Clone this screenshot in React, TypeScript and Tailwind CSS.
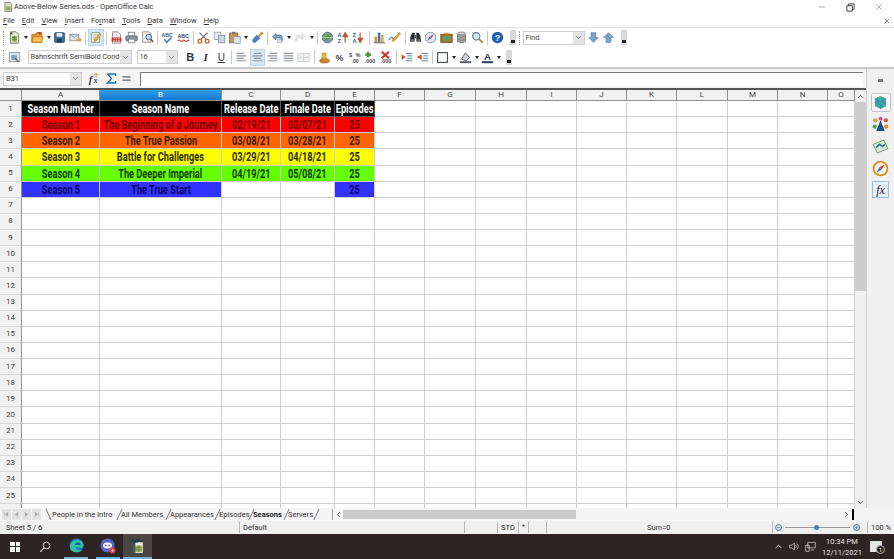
import type { ReactNode } from "react";
import { ChevronDown, ChevronLeft, ChevronRight, ChevronUp, X, Minus } from "lucide-react";

const COLUMNS = ["A", "B", "C", "D", "E", "F", "G", "H", "I", "J", "K", "L", "M", "N", "O"];

const ROWS = [
  { bg: "bg-[#ff0000]", text: "text-[#6e0606]", cells: ["Season 1", "The Beginning of a Journey", "02/19/21", "03/07/21", "25"] },
  { bg: "bg-[#ff6600]", text: "text-[#3c1a02]", cells: ["Season 2", "The True Passion", "03/08/21", "03/28/21", "25"] },
  { bg: "bg-[#ffff00]", text: "text-[#2c2c02]", cells: ["Season 3", "Battle for Challenges", "03/29/21", "04/18/21", "25"] },
  { bg: "bg-[#66ff00]", text: "text-[#123d02]", cells: ["Season 4", "The Deeper Imperial", "04/19/21", "05/08/21", "25"] },
  { bg: "bg-[#3333ff]", text: "text-[#08085e]", cells: ["Season 5", "The True Start", "", "", "25"] },
];

const HEADERS = ["Season Number", "Season Name", "Release Date", "Finale Date", "Episodes"];
const TABS = [
  { name: "People in the Intro", w: "w-[69px]" },
  { name: "All Members", w: "w-[49px]" },
  { name: "Appearances", w: "w-[49px]" },
  { name: "Episodes", w: "w-[34px]" },
  { name: "Seasons", w: "w-[35px]" },
  { name: "Servers", w: "w-[30px]" },
];
const NAV_ARROWS = ["M7 2v6L3 5zM2 2v6", "M7 2v6L3 5z", "M3 2v6l4-3z", "M3 2v6l4-3zM8 2v6"];

function Svg({ children }: { children: ReactNode }) {
  return (
    <svg viewBox="0 0 16 16" className="h-[13px] w-[13px]">
      {children}
    </svg>
  );
}

const Icons = {
  newDoc: (
    <Svg>
      <path d="M3 1h7l3 3v11H3z" fill="#e8e8d8" stroke="#5d6b3a" />
      <path d="M5 6h6v7H5z" fill="#9bb45e" />
      <path d="M5 8h6M5 10.500h6M8 6v7" stroke="#4d5f2a" strokeWidth=".7" />
      <path d="M4 1l2 3-3 0z" fill="#333" />
    </Svg>
  ),
  open: (
    <Svg>
      <path d="M1 4h5l1-2h6v12H1z" fill="#e8a033" stroke="#a86a14" />
      <path d="M3 7h12l-2 7H1z" fill="#f6c057" stroke="#b57818" />
      <path d="M8 2l3-1 2 2-2 2z" fill="#c23a2b" />
    </Svg>
  ),
  save: (
    <Svg>
      <rect x="2" y="2" width="12" height="12" rx="1" fill="#3f6f9c" stroke="#284b6c" />
      <rect x="4.500" y="2.500" width="7" height="4.500" fill="#e8eef4" />
      <rect x="5" y="9.500" width="6" height="4.500" fill="#1f3c57" />
    </Svg>
  ),
  mail: (
    <Svg>
      <rect x="1" y="4" width="11" height="8" fill="#dfe3ea" stroke="#8a8f99" />
      <path d="M1 4l5.500 4L12 4" fill="none" stroke="#8a8f99" />
      <path d="M9 10h4V8l3 3-3 3v-2H9z" fill="#e69a24" />
    </Svg>
  ),
  edit: (
    <Svg>
      <path d="M3 2h10v12H3z" fill="#f4f4ee" stroke="#8a8a80" />
      <path d="M5 5h6M5 7.500h4M5 10h3" stroke="#a8a8a0" />
      <path d="M13 3l2 2-6 7-3 1 1-3z" fill="#e5b23a" stroke="#9c7414" strokeWidth=".6" />
    </Svg>
  ),
  pdf: (
    <Svg>
      <path d="M3 1h7l3 3v11H3z" fill="#eee" stroke="#888" />
      <rect x="2" y="8" width="12" height="5" fill="#c8261e" />
      <path d="M4 9.500h8M4 11.500h8" stroke="#fff" strokeWidth=".9" strokeDasharray="2 1" />
    </Svg>
  ),
  print: (
    <Svg>
      <rect x="4" y="1.500" width="8" height="5" fill="#f5f5f5" stroke="#777" />
      <rect x="1" y="6" width="14" height="6" rx="1" fill="#8f939b" stroke="#5e6168" />
      <rect x="4" y="10" width="8" height="4.500" fill="#fff" stroke="#777" />
    </Svg>
  ),
  preview: (
    <Svg>
      <path d="M2 1h8l2 2v11H2z" fill="#eee" stroke="#8a8a8a" />
      <circle cx="9.500" cy="7.500" r="3.500" fill="#b9d8f0" stroke="#4b6c8c" strokeWidth="1.200" />
      <path d="M12 10l3 3.500" stroke="#8a5a20" strokeWidth="2" />
    </Svg>
  ),
  spell: (
    <Svg>
      <text x="0.500" y="7" fontSize="6.500" fontWeight="700" fontFamily="Liberation Sans" fill="#2d5c8f">ABC</text>
      <path d="M4 10l3 4 6-6" fill="none" stroke="#3a7fc0" strokeWidth="2" />
    </Svg>
  ),
  autoSpell: (
    <Svg>
      <text x="0.500" y="8" fontSize="6.500" fontWeight="700" fontFamily="Liberation Sans" fill="#2d4a6f">ABC</text>
      <path d="M1 12q1.500-2 3 0t3 0 3 0 3 0 2 0" fill="none" stroke="#d02a22" strokeWidth="1.300" />
    </Svg>
  ),
  cut: (
    <Svg>
      <path d="M3 2l9 9M13 2l-9 9" stroke="#6a6f78" strokeWidth="1.500" />
      <circle cx="3.500" cy="12.500" r="2.300" fill="none" stroke="#c9601a" strokeWidth="1.600" />
      <circle cx="12.500" cy="12.500" r="2.300" fill="none" stroke="#c9601a" strokeWidth="1.600" />
    </Svg>
  ),
  copy: (
    <Svg>
      <rect x="1.500" y="1.500" width="8" height="9" fill="#e6edf5" stroke="#8fa0b4" />
      <rect x="6.500" y="5.500" width="8" height="9" fill="#c8d6e6" stroke="#7d90a8" />
    </Svg>
  ),
  paste: (
    <Svg>
      <rect x="2" y="2.500" width="10" height="12" fill="#c89a56" stroke="#8a6428" />
      <rect x="5" y="1" width="4" height="3" fill="#777" />
      <rect x="7" y="7" width="8" height="8" fill="#dfe7f2" stroke="#7d90a8" />
    </Svg>
  ),
  brush: (
    <Svg>
      <path d="M9 6l4-5 2 2-5 4z" fill="#d9a23a" stroke="#8f6a1c" strokeWidth=".6" />
      <path d="M2 11l5-6 4 4-6 5q-3 1-3-3z" fill="#4f83c4" stroke="#2d5688" strokeWidth=".7" />
    </Svg>
  ),
  undo: (
    <Svg>
      <path d="M6 3L2 7l4 4V8.500h4q2 0 2 2v1l2 1V8q0-3-3-3H6z" fill="#7ea4c8" stroke="#48698a" strokeWidth=".8" />
      <rect x="8" y="10" width="5" height="4.500" fill="#dfe7f2" stroke="#8fa0b4" strokeWidth=".6" />
    </Svg>
  ),
  redo: (
    <Svg>
      <path d="M10 3l4 4-4 4V8.500H6q-2 0-2 2v1l-2 1V8q0-3 3-3h5z" fill="#e8e8e8" stroke="#d6d6d6" strokeWidth=".8" />
    </Svg>
  ),
  globe: (
    <Svg>
      <circle cx="8" cy="8" r="6.500" fill="#7d98a8" stroke="#4a6270" />
      <path d="M3 5q3 1 5-1t4 1l1 3q-3 0-4 2l-2 3q-1-2-3-3z" fill="#68a04a" />
      <path d="M1.500 8h13" stroke="#dfe8ee" strokeWidth=".7" />
    </Svg>
  ),
  sortAsc: (
    <Svg>
      <text x="0.500" y="7" fontSize="7" fontWeight="700" fontFamily="Liberation Sans" fill="#2d5c8f">A</text>
      <text x="0.500" y="15" fontSize="7" fontWeight="700" fontFamily="Liberation Sans" fill="#2d5c8f">Z</text>
      <path d="M10 14V5M7.500 7L10 2l3 5z" stroke="#c2532a" strokeWidth="1.500" fill="#c2532a" />
    </Svg>
  ),
  sortDesc: (
    <Svg>
      <text x="0.500" y="7" fontSize="7" fontWeight="700" fontFamily="Liberation Sans" fill="#2d5c8f">Z</text>
      <text x="0.500" y="15" fontSize="7" fontWeight="700" fontFamily="Liberation Sans" fill="#2d5c8f">A</text>
      <path d="M10 2v9M7.500 9l2.500 5 3-5z" stroke="#c2532a" strokeWidth="1.500" fill="#c2532a" />
    </Svg>
  ),
  chart: (
    <Svg>
      <rect x="2" y="7" width="3" height="7" fill="#d9862a" />
      <rect x="6" y="2" width="3" height="12" fill="#3d6fa8" />
      <rect x="10" y="5" width="3" height="9" fill="#d9a23a" />
      <path d="M1 14.500h14" stroke="#444" />
    </Svg>
  ),
  draw: (
    <Svg>
      <path d="M1 11q3-5 5-2t4-3" fill="none" stroke="#4f83c4" strokeWidth="1.500" />
      <path d="M14 2l1.500 1.500L8 12l-3 1 1-3z" fill="#e5a83a" stroke="#9c7414" strokeWidth=".6" />
    </Svg>
  ),
  binoculars: (
    <Svg>
      <path d="M2 6l2-4h3v11H1zM14 6l-2-4H9v11h6z" fill="#2e3238" />
      <rect x="7" y="5" width="2" height="4" fill="#55595f" />
      <rect x="2" y="10" width="4" height="3" fill="#6c7076" />
      <rect x="10" y="10" width="4" height="3" fill="#6c7076" />
    </Svg>
  ),
  navigator: (
    <Svg>
      <circle cx="8" cy="8" r="6.500" fill="#dfe5ee" stroke="#7d8694" />
      <path d="M12 4L7 7l2 2z" fill="#c8352a" />
      <path d="M4 12l3-5 2 2z" fill="#3d6fa8" />
    </Svg>
  ),
  gallery: (
    <Svg>
      <rect x="1" y="4" width="14" height="10" fill="#a8752c" stroke="#6e4a14" />
      <rect x="3.500" y="6" width="9" height="6" fill="#5f9a6a" />
      <path d="M5 2h6v2H5z" fill="#d9a23a" />
    </Svg>
  ),
  database: (
    <Svg>
      <path d="M3 3v10q5 3 10 0V3z" fill="#a8a8a4" stroke="#74746f" />
      <ellipse cx="8" cy="3" rx="5" ry="1.800" fill="#d6d6d2" stroke="#74746f" />
      <path d="M3 6.500q5 3 10 0M3 10q5 3 10 0" fill="none" stroke="#74746f" />
    </Svg>
  ),
  zoom: (
    <Svg>
      <circle cx="6.500" cy="6.500" r="4.500" fill="#cfe4f4" stroke="#5a7a96" strokeWidth="1.300" />
      <path d="M10 10l4.500 4.500" stroke="#b47f24" strokeWidth="2.200" />
    </Svg>
  ),
  help: (
    <Svg>
      <circle cx="8" cy="8" r="7" fill="#1d5fb0" />
      <text x="8" y="12" textAnchor="middle" fontSize="11" fontWeight="700" fontFamily="Liberation Sans" fill="#fff">?</text>
    </Svg>
  ),
  arrowDown: (
    <Svg>
      <path d="M5 2h6v6h3l-6 6-6-6h3z" fill="#7ba3c9" stroke="#55799c" strokeWidth=".7" />
    </Svg>
  ),
  arrowUp: (
    <Svg>
      <path d="M5 14h6V8h3L8 2 2 8h3z" fill="#7ba3c9" stroke="#55799c" strokeWidth=".7" />
    </Svg>
  ),
  styles: (
    <Svg>
      <rect x="1.500" y="2" width="13" height="11" fill="#e2e5ea" stroke="#8a8f99" />
      <rect x="4" y="5" width="7" height="6" fill="#8a9fb4" />
      <path d="M9 9l4 4" stroke="#555" strokeWidth="1.500" />
    </Svg>
  ),
  currency: (
    <Svg>
      <ellipse cx="8" cy="12" rx="6" ry="2.800" fill="#c9862a" stroke="#8a5a14" strokeWidth=".7" />
      <path d="M5 2.500h5V10H5z" fill="#e8b64c" stroke="#9c7414" strokeWidth=".6" />
    </Svg>
  ),
  percent: (
    <Svg>
      <text x="8" y="12" textAnchor="middle" fontSize="11" fontWeight="700" fontFamily="Liberation Sans" fill="#3c4450">%</text>
    </Svg>
  ),
  numFormat: (
    <Svg>
      <text x="0" y="7" fontSize="7" fontWeight="700" fontFamily="Liberation Sans" fill="#2d5c8f">$</text>
      <text x="8" y="7" fontSize="7" fontWeight="700" fontFamily="Liberation Sans" fill="#3c4450">%</text>
      <text x="3" y="15" fontSize="6.500" fontWeight="700" fontFamily="Liberation Sans" fill="#3c4450">.00</text>
    </Svg>
  ),
  addDec: (
    <Svg>
      <path d="M5 1v7M1.500 4.500h7" stroke="#4f9a3c" strokeWidth="3" />
      <text x="1" y="15" fontSize="6.500" fontWeight="700" fontFamily="Liberation Sans" fill="#3c4450">.000</text>
    </Svg>
  ),
  delDec: (
    <Svg>
      <path d="M2 1l9 8M11 1L2 9" stroke="#cf2f25" strokeWidth="2.500" />
      <text x="1" y="15" fontSize="6.500" fontWeight="700" fontFamily="Liberation Sans" fill="#3c4450">.000</text>
    </Svg>
  ),
  outdent: (
    <Svg>
      <path d="M7 3h8M9 6h6M9 9h6M7 12h8" stroke="#5b7ea3" strokeWidth="1.200" />
      <path d="M7 7.500L2 4v7z" fill="#d1502a" />
    </Svg>
  ),
  indent: (
    <Svg>
      <path d="M7 3h8M9 6h6M9 9h6M7 12h8" stroke="#5b7ea3" strokeWidth="1.200" />
      <path d="M1 7.500L7 4v7z" fill="#d1502a" />
    </Svg>
  ),
  border: (
    <Svg>
      <rect x="2" y="2" width="12" height="12" fill="#fff" stroke="#3f4650" strokeWidth="1.300" />
    </Svg>
  ),
  bgColor: (
    <Svg>
      <path d="M3 10l5-8 5 6-4 4z" fill="#cfd3d8" stroke="#4a4f57" />
      <rect x="1" y="12.500" width="14" height="2.500" fill="#5a606a" />
    </Svg>
  ),
  fontColor: (
    <Svg>
      <text x="8" y="11" textAnchor="middle" fontSize="12" fontWeight="700" fontFamily="Liberation Sans" fill="#2c4463">A</text>
      <rect x="1" y="12.500" width="14" height="2.500" fill="#2c4463" />
    </Svg>
  ),
  fx: (
    <Svg>
      <text x="1" y="13" fontSize="13" fontStyle="italic" fontWeight="700" fontFamily="Liberation Serif" fill="#303a46">f</text>
      <text x="7" y="13" fontSize="9" fontStyle="italic" fontWeight="700" fontFamily="Liberation Serif" fill="#303a46">x</text>
      <path d="M10 1v5M7.500 3.500h5" stroke="#d9a23a" strokeWidth="1.300" />
    </Svg>
  ),
  sigma: (
    <Svg>
      <path d="M3 2.500h10v2.500M13 13.500H3l5-5.500-5-5.500M3 13.500h10V11" fill="none" stroke="#2e6fb0" strokeWidth="1.700" />
    </Svg>
  ),
  equals: (
    <Svg>
      <path d="M3 6h10M3 10h10" stroke="#5a626c" strokeWidth="1.500" />
    </Svg>
  ),
};

function Btn({ icon, active }: { icon: ReactNode; active?: boolean }) {
  return (
    <div
      className={`flex h-[17px] w-[15.500px] shrink-0 items-center justify-center ${
        active ? "border border-[#b5d3ea] bg-[#d6e8f5]" : ""
      }`}
    >
      {icon}
    </div>
  );
}

function Drop() {
  return (
    <div className="flex h-[17px] w-[7px] shrink-0 items-center justify-center">
      <div className="h-0 w-0 border-x-[2.500px] border-t-[3px] border-x-transparent border-t-[#222]" />
    </div>
  );
}

function Sep() {
  return <div className="mx-[2px] h-[14px] w-px shrink-0 bg-[#c9c9c9]" />;
}

function Overflow() {
  return (
    <div className="flex h-[15px] w-[6px] shrink-0 items-end justify-center bg-[#d8d8d8] pb-[2px]">
      <div className="h-[3px] w-[4px] bg-[#222]" />
    </div>
  );
}

function Grip() {
  return <div className="mx-[3px] h-[14px] w-0 shrink-0 border-l border-dotted border-[#9a9a9a]" />;
}

function Combo({ label, width }: { label: string; width: string }) {
  return (
    <div className={`flex h-[14px] shrink-0 items-center border border-[#d0d0d0] bg-white pl-[2px] ${width}`}>
      <span className="min-w-0 flex-1 whitespace-nowrap text-[7.500px] leading-none tracking-[-0.1px] text-[#444]">{label}</span>
      <div className="flex h-full w-[11px] shrink-0 items-center justify-center bg-[#e4e4e4]">
        <ChevronDown size={9} className="text-[#777]" />
      </div>
    </div>
  );
}

function Narrow({ children }: { children: ReactNode }) {
  return (
    <span className="inline-block origin-center scale-x-[0.71] whitespace-nowrap font-['Roboto',sans-serif] text-[13px] leading-none font-bold">
      {children}
    </span>
  );
}

function Sheet() {
  const cell = "flex items-center justify-center overflow-hidden border-r border-b";
  const head = "flex items-center justify-center border-r border-b border-[#8f8f8f] bg-[#f1f1f1] text-[8px] leading-none text-[#444]";
  return (
    <div className="grid grid-cols-[22px_78px_122px_59px_54px_40px_50px_51px_51px_50px_50px_50px_51px_50px_50px_27px] grid-rows-[11px] auto-rows-[16.125px] content-start">
      <div className="border-r border-b border-[#8f8f8f] bg-[#f1f1f1]" />
      {COLUMNS.map((c) => (
        <div
          key={c}
          className={`${head} ${c === "B" ? "bg-gradient-to-b from-[#35a0ea] to-[#0f78cf] text-white" : ""}`}
        >
          {c}
        </div>
      ))}
      {Array.from({ length: 26 }, (_, r) => {
        const row = r > 0 ? ROWS[r - 1] : undefined;
        return (
          <div key={r} className="contents">
            <div className={`${head} border-b-[#d8d8d8] border-r-[#8f8f8f]`}>{r + 1}</div>
            {COLUMNS.map((c, i) => {
              if (r === 0 && i < 5) {
                return (
                  <div key={c} className={`${cell} border-[#555] bg-black text-white`}>
                    <Narrow>{HEADERS[i]}</Narrow>
                  </div>
                );
              }
              if (row && i < 5 && row.cells[i] !== "") {
                return (
                  <div key={c} className={`${cell} border-[#cfcfcf] ${row.bg} ${row.text}`}>
                    <Narrow>{row.cells[i]}</Narrow>
                  </div>
                );
              }
              return <div key={c} className={`${cell} border-[#cfcfcf] bg-white`} />;
            })}
          </div>
        );
      })}
    </div>
  );
}

function TabStrip() {
  return (
    <div className="flex h-[13px] shrink-0 items-center bg-[#f5f5f5] text-[7.500px] leading-none text-[#333]">
      <div className="flex w-[42px] shrink-0 justify-end gap-[1px] pr-[1px]">
        {NAV_ARROWS.map((d) => (
          <span key={d} className="flex h-[11px] w-[9px] items-center justify-center bg-[#e2e2e2]">
            <svg viewBox="0 0 10 10" className="h-[7px] w-[7px]">
              <path d={d} fill="#a8a8a8" stroke="#a8a8a8" strokeWidth=".6" />
            </svg>
          </span>
        ))}
      </div>
      <div className="flex w-[276px] shrink-0 items-center pl-[6px]">
        <div className="mr-[3px] h-[11px] w-0 shrink-0 skew-x-[25deg] border-l border-[#777]" />
        {TABS.map((t) => (
          <div key={t.name} className={`flex shrink-0 items-center justify-between ${t.w}`}>
            <span className={`whitespace-nowrap ${t.name === "Seasons" ? "font-bold text-[#222]" : ""}`}>{t.name}</span>
            <div className="mr-[1px] h-[11px] w-0 shrink-0 -skew-x-[25deg] border-l border-[#777]" />
          </div>
        ))}
      </div>
      <div className="h-[11px] w-[15px] shrink-0 border-r border-[#999]" />
      <ChevronLeft size={9} className="ml-[1px] shrink-0 text-[#333]" />
      <div className="h-[9px] w-[233px] shrink-0 bg-[#c9c9c9]" />
      <div className="flex flex-1 items-center justify-end">
        <ChevronRight size={9} className="text-[#333]" />
        <div className="mx-[1px] h-[11px] w-[2px] bg-black" />
      </div>
      <div className="w-[39px] shrink-0 bg-[#f0f0f0]" />
    </div>
  );
}

function StatusBar() {
  const sep = "h-[11px] shrink-0 border-l border-[#b5b5b5] flex items-center";
  return (
    <div className="flex h-[13px] shrink-0 items-center bg-[#f0f0f0] text-[7.500px] leading-none text-[#333]">
      <span className="w-[239px] shrink-0 pl-[6px]">Sheet 5 / 6</span>
      <div className={`${sep} w-[225px] pl-[3px]`}>Default</div>
      <div className={`${sep} w-[33px]`} />
      <div className={`${sep} w-[21px] pl-[3px]`}>STD</div>
      <div className={`${sep} w-[10px] justify-center text-[7px]`}>*</div>
      <div className={`${sep} w-[18px]`} />
      <div className={`${sep} w-[226px] pl-[100px]`}>Sum=0</div>
      <div className={`${sep} w-[95px] pl-[2px]`}>
        <span className="flex h-[7px] w-[7px] items-center justify-center rounded-full border border-[#4d7ea8] bg-[#cfe0ee] text-[#4d7ea8]">
          <Minus size={5} strokeWidth={3} />
        </span>
        <div className="relative mx-[3px] h-px w-[65px] bg-[#9a9a9a]">
          <span className="absolute left-[29px] top-[-2px] h-[5px] w-[5px] rounded-full bg-[#4d7ea8]" />
        </div>
        <span className="flex h-[7px] w-[7px] items-center justify-center rounded-full border border-[#4d7ea8] bg-[#cfe0ee] text-[8px] leading-none text-[#4d7ea8]">
          +
        </span>
      </div>
      <div className={`${sep} min-w-0 flex-1 whitespace-nowrap pl-[3px]`}>100 %</div>
    </div>
  );
}

function Taskbar() {
  return (
    <div className="flex h-[25px] shrink-0 items-center bg-[#2c2523] text-white">
      <div className="flex w-[30px] shrink-0 justify-center">
        <div className="grid h-[10px] w-[10px] grid-cols-2 gap-px">
          <span className="bg-white" />
          <span className="bg-white" />
          <span className="bg-white" />
          <span className="bg-white" />
        </div>
      </div>
      <div className="flex w-[30px] shrink-0 justify-center">
        <svg viewBox="0 0 16 16" className="h-[12px] w-[12px]">
          <circle cx="10" cy="6" r="4.500" fill="none" stroke="#ddd" strokeWidth="1.300" />
          <path d="M6.500 9.500L1.500 14.500" stroke="#ddd" strokeWidth="1.500" />
        </svg>
      </div>
      <div className="ml-[4px] flex h-full w-[24px] shrink-0 items-center justify-center border-b-2 border-[#6fb3e0]">
        <svg viewBox="0 0 16 16" className="h-[15px] w-[15px]">
          <circle cx="8" cy="8" r="7.500" fill="#1777c4" />
          <path d="M1 9q1-7 8-7 6 0 6.500 6 0 2-3 2H7q1 3 5 3l2-.5q-2 3-6 2.500Q1 15 1 9z" fill="#35c1a4" />
          <path d="M6 7.500q1-3 3.500-3t3 3z" fill="#1b5fa8" />
        </svg>
      </div>
      <div className="ml-[8px] flex h-full w-[24px] shrink-0 items-center justify-center border-b-2 border-[#6fb3e0]">
        <svg viewBox="0 0 16 16" className="h-[16px] w-[16px]">
          <circle cx="7.500" cy="7.500" r="7" fill="#5865c8" />
          <ellipse cx="7.500" cy="7.500" rx="4.500" ry="3" fill="#fff" />
          <circle cx="5.800" cy="7.500" r="1" fill="#5865c8" />
          <circle cx="9.200" cy="7.500" r="1" fill="#5865c8" />
          <circle cx="12.500" cy="12.500" r="3" fill="#e23b3b" />
          <circle cx="12.500" cy="12.500" r="1" fill="#fff" />
        </svg>
      </div>
      <div className="ml-[3px] flex h-full w-[29px] shrink-0 items-center justify-center border-b-2 border-[#6fb3e0] bg-[#4b4644]">
        <svg viewBox="0 0 16 16" className="h-[17px] w-[17px]">
          <path d="M4 5h9v10H4z" fill="#e9ecd8" />
          <path d="M6 8h6v6H6z" fill="#93b04c" />
          <path d="M6 10h6M6 12h6M9 8v6" stroke="#5d7428" strokeWidth=".6" />
          <path d="M2 2l5 1 3-2 1 3-7 2z" fill="#1f3f48" />
          <path d="M3 5h3v10H3z" fill="#3a5560" />
        </svg>
      </div>
      <div className="flex-1" />
      <ChevronUp size={11} className="mr-[5px] shrink-0 text-[#ddd]" />
      <svg viewBox="0 0 16 16" className="mr-[5px] h-[11px] w-[11px] shrink-0">
        <path d="M1 6h3l4-3v10l-4-3H1z" fill="none" stroke="#ddd" />
        <path d="M10 6q1.500 2 0 4M12 4q3 4 0 8" fill="none" stroke="#ddd" />
      </svg>
      <svg viewBox="0 0 16 16" className="mr-[5px] h-[11px] w-[11px] shrink-0">
        <path d="M4 2h11v8H4zM1 6h5v9H1zM8 13h5" fill="#2c2523" stroke="#ddd" />
      </svg>
      <div className="flex w-[42px] shrink-0 flex-col items-center text-[7.500px] leading-[11px] text-[#e6e6e6]">
        <span>10:34 PM</span>
        <span>12/11/2021</span>
      </div>
      <div className="ml-[7px] flex w-[24px] shrink-0 items-center">
        <div className="relative h-[11px] w-[12px] bg-[#e6e6e6]">
          <span className="absolute left-[6px] top-[4px] flex h-[9px] w-[9px] items-center justify-center rounded-full border border-[#aaa] bg-[#2c2523] text-[6px] leading-none text-white">
            1
          </span>
        </div>
      </div>
    </div>
  );
}

export default function App() {
  return (
    <div className="flex h-[559px] w-[894px] flex-col overflow-hidden bg-white font-['Roboto',sans-serif]">
      <div className="flex h-[14px] shrink-0 items-center text-[7.500px] leading-none text-[#333]">
        <div className="ml-[3px] mr-[3px] w-[8px]">
          <svg viewBox="0 0 16 16" className="h-[10px] w-[10px]">
            <path d="M3 1h9l2 3v11H3z" fill="#dde2c8" stroke="#39502c" />
            <path d="M5 7h7v6H5z" fill="#8daa4c" />
          </svg>
        </div>
        <span className="flex-1">Above-Below Series.ods - OpenOffice Calc</span>
        <Minus size={10} strokeWidth={1} className="mr-[19px]" />
        <svg viewBox="0 0 10 10" className="mr-[19px] h-[9px] w-[9px]">
          <path d="M1 3h6v6H1zM3 3V1h6v6H7" fill="none" stroke="#333" />
        </svg>
        <X size={10} strokeWidth={1} className="mr-[10px]" />
      </div>

      <div className="flex h-[14px] shrink-0 items-center gap-[7px] border-b border-[#e4e4e4] pl-[3px] text-[7.500px] leading-none text-[#333]">
        <span><u>F</u>ile</span>
        <span><u>E</u>dit</span>
        <span><u>V</u>iew</span>
        <span><u>I</u>nsert</span>
        <span>Fo<u>r</u>mat</span>
        <span><u>T</u>ools</span>
        <span><u>D</u>ata</span>
        <span><u>W</u>indow</span>
        <span><u>H</u>elp</span>
        <div className="flex flex-1 justify-end pr-[3px]">
          <X size={8} className="text-[#555]" />
        </div>
      </div>

      <div className="flex h-[19px] shrink-0 items-center">
        <Grip />
        <Btn icon={Icons.newDoc} />
        <Drop />
        <Btn icon={Icons.open} />
        <Drop />
        <Btn icon={Icons.save} />
        <Btn icon={Icons.mail} />
        <Sep />
        <Btn icon={Icons.edit} active />
        <Sep />
        <Btn icon={Icons.pdf} />
        <Btn icon={Icons.print} />
        <Btn icon={Icons.preview} />
        <Sep />
        <Btn icon={Icons.spell} />
        <Btn icon={Icons.autoSpell} />
        <Sep />
        <Btn icon={Icons.cut} />
        <Btn icon={Icons.copy} />
        <Btn icon={Icons.paste} />
        <Drop />
        <Btn icon={Icons.brush} />
        <Sep />
        <Btn icon={Icons.undo} />
        <Drop />
        <Btn icon={Icons.redo} />
        <Drop />
        <Sep />
        <Btn icon={Icons.globe} />
        <Btn icon={Icons.sortAsc} />
        <Btn icon={Icons.sortDesc} />
        <Sep />
        <Btn icon={Icons.chart} />
        <Btn icon={Icons.draw} />
        <Sep />
        <Btn icon={Icons.binoculars} />
        <Btn icon={Icons.navigator} />
        <Btn icon={Icons.gallery} />
        <Btn icon={Icons.database} />
        <Btn icon={Icons.zoom} />
        <Sep />
        <Btn icon={Icons.help} />
        <div className="w-[4px] shrink-0" />
        <Overflow />
        <Grip />
        <Combo label="Find" width="w-[62px]" />
        <div className="w-[1px] shrink-0" />
        <Btn icon={Icons.arrowDown} />
        <Btn icon={Icons.arrowUp} />
        <div className="w-[4px] shrink-0" />
        <Overflow />
      </div>

      <div className="flex h-[20px] shrink-0 items-center">
        <Grip />
        <Btn icon={Icons.styles} />
        <div className="w-[5px] shrink-0" />
        <Combo label="Bahnschrift SemiBold Cond" width="w-[104px]" />
        <div className="w-[5px] shrink-0" />
        <Combo label="16" width="w-[41px]" />
        <div className="w-[5px] shrink-0" />
        <Btn icon={<span className="font-['Liberation_Sans'] text-[11px] font-bold text-[#2b3542]">B</span>} />
        <Btn icon={<span className="font-['Liberation_Serif'] text-[11px] font-bold italic text-[#2b3542]">I</span>} />
        <Btn icon={<span className="font-['Liberation_Sans'] text-[10px] text-[#2b3542] underline">U</span>} />
        <Sep />
        {[
          "M2 3h9M2 6h12M2 9h9M2 12h12",
          "M3.500 3h9M2 6h12M3.500 9h9M2 12h12",
          "M5 3h9M2 6h12M5 9h9M2 12h12",
          "M2 3h12M2 6h12M2 9h12M2 12h12",
        ].map((d, i) => (
          <Btn
            key={d}
            active={i === 1}
            icon={
              <Svg>
                <path d={d} stroke="#8d96a2" strokeWidth="1.400" />
              </Svg>
            }
          />
        ))}
        <Btn
          icon={
            <Svg>
              <rect x="1" y="3" width="14" height="10" fill="#f1f1f1" stroke="#d0d0d0" />
              <path d="M8 3v10M1 8h14" stroke="#d0d0d0" />
            </Svg>
          }
        />
        <Sep />
        <Btn icon={Icons.currency} />
        <Btn icon={Icons.percent} />
        <Btn icon={Icons.numFormat} />
        <Btn icon={Icons.addDec} />
        <Btn icon={Icons.delDec} />
        <Sep />
        <Btn icon={Icons.outdent} />
        <Btn icon={Icons.indent} />
        <Sep />
        <Btn icon={Icons.border} />
        <Drop />
        <Btn icon={Icons.bgColor} />
        <Drop />
        <Btn icon={Icons.fontColor} />
        <Drop />
        <div className="w-[3px] shrink-0" />
        <Overflow />
      </div>

      <div className="flex min-h-0 flex-1 border-t-2 border-[#c8c8c8]">
        <div className="flex min-w-0 flex-1 flex-col">
          <div className="flex h-[19px] shrink-0 items-center bg-[#f4f4f4] pl-[3px] pr-[3px]">
            <Combo label="B31" width="w-[79px]" />
            <div className="w-[5px] shrink-0" />
            <Btn icon={Icons.fx} />
            <div className="w-[1px] shrink-0" />
            <Btn icon={Icons.sigma} />
            <Btn icon={Icons.equals} />
            <div className="w-[5px] shrink-0" />
            <div className="h-[14px] flex-1 border-t border-l border-[#777] bg-white" />
          </div>
          <div className="flex min-h-0 flex-1 border-t-2 border-[#555]">
            <div className="min-w-0 flex-1 overflow-hidden">
              <Sheet />
            </div>
            <div className="flex w-[11px] shrink-0 flex-col items-center bg-[#f0f0f0]">
              <ChevronUp size={9} className="mt-[2px] shrink-0 text-[#333]" />
              <div className="mt-[1px] h-[189px] w-full bg-[#cdcdcd]" />
              <div className="flex-1" />
              <ChevronDown size={9} className="mb-[1px] shrink-0 text-[#333]" />
            </div>
          </div>
        </div>
        <div className="flex w-[28px] shrink-0 flex-col items-center border-l border-[#d0d0d0] bg-[#f0f0f0]">
          <div className="mb-[11px] mt-[10px] h-[3px] w-[5px] bg-[#777]" />
          <div className="mb-[2px] flex h-[19px] w-[20px] items-center justify-center rounded-[2px] border border-[#c4c4c4] bg-[#f8f8f8]">
            <svg viewBox="0 0 16 16" className="h-[15px] w-[15px]">
              <path d="M8 1l6 3v8l-6 3-6-3V4z" fill="#43b488" />
              <path d="M2 4l6 3 6-3M8 7v8M5 2.500v8M11 2.500v8M2 8l6 3 6-3" fill="none" stroke="#3a8ad0" strokeWidth="1.200" />
            </svg>
          </div>
          <div className="my-[2px] h-[17px]">
            <svg viewBox="0 0 16 16" className="h-[17px] w-[17px]">
              <path d="M8 4l4 10H4z" fill="#1f4f80" />
              <circle cx="3" cy="4" r="2" fill="#d9a23a" />
              <circle cx="13" cy="4" r="2" fill="#d8503a" />
              <circle cx="8" cy="2.500" r="1.800" fill="#c84a9a" />
              <circle cx="2.500" cy="10" r="2" fill="#4fa04a" />
              <circle cx="13.500" cy="10" r="2" fill="#e08a2a" />
            </svg>
          </div>
          <div className="my-[2.500px] h-[17px]">
            <svg viewBox="0 0 16 16" className="h-[17px] w-[17px]">
              <path d="M1 6l10-4 4 8-10 4z" fill="#d8ecd8" stroke="#7fa07f" />
              <path d="M4 9l3-3 3 2 2-2" fill="none" stroke="#2f6f9c" strokeWidth="1.500" />
            </svg>
          </div>
          <div className="my-[2.500px] h-[17px]">
            <svg viewBox="0 0 16 16" className="h-[17px] w-[17px]">
              <circle cx="8" cy="8" r="6.500" fill="#f4f4f4" stroke="#dc8f22" strokeWidth="1.800" />
              <path d="M12 4L7 7l2 2z" fill="#c8352a" />
              <path d="M4 12l3-5 2 2z" fill="#3d6fa8" />
            </svg>
          </div>
          <div className="my-[2px] flex h-[17px] w-[17px] items-center justify-center border border-[#9cc0dc] bg-[#e8f2fa] font-['Liberation_Serif'] text-[12px] italic leading-none text-[#223]">
            fx
          </div>
        </div>
      </div>

      <TabStrip />
      <StatusBar />
      <Taskbar />
    </div>
  );
}
